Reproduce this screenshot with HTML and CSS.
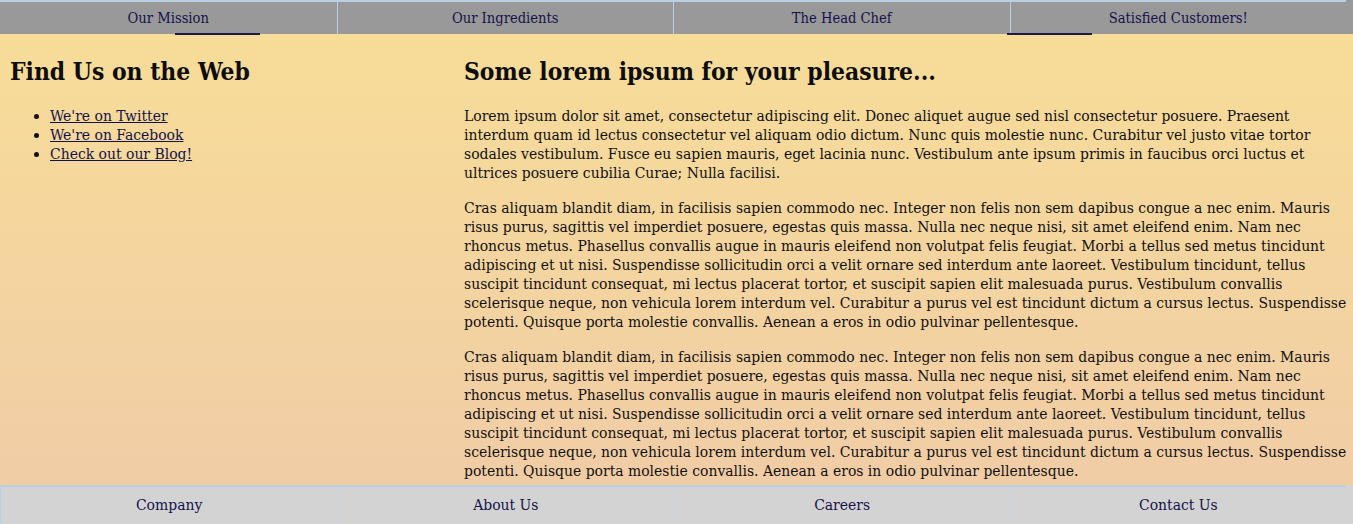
FILE: index.html
```html
<!DOCTYPE html>
<html>
<head>
<meta charset="utf-8">
<link rel="stylesheet" href="styles.css">
<title>Restaurant</title>
</head>
<body>
<nav class="topnav">
  <ul class="navlist">
    <li><a href="#">Our Mission</a></li>
    <li><a href="#">Our Ingredients</a></li>
    <li><a href="#">The Head Chef</a></li>
    <li><a href="#">Satisfied Customers!</a></li>
  </ul>
  <span class="mark mark-a"></span>
  <span class="mark mark-b"></span>
</nav>
<main class="main">
  <aside class="side">
    <h2>Find Us on the Web</h2>
    <ul class="links">
      <li><a href="#">We're on Twitter</a></li>
      <li><a href="#">We're on Facebook</a></li>
      <li><a href="#">Check out our Blog!</a></li>
    </ul>
  </aside>
  <section class="content">
    <h2>Some lorem ipsum for your pleasure...</h2>
    <p>Lorem ipsum dolor sit amet, consectetur adipiscing elit. Donec aliquet augue sed nisl consectetur posuere. Praesent interdum quam id lectus consectetur vel aliquam odio dictum. Nunc quis molestie nunc. Curabitur vel justo vitae tortor sodales vestibulum. Fusce eu sapien mauris, eget lacinia nunc. Vestibulum ante ipsum primis in faucibus orci luctus et ultrices posuere cubilia Curae; Nulla facilisi.</p>
    <p>Cras aliquam blandit diam, in facilisis sapien commodo nec. Integer non felis non sem dapibus congue a nec enim. Mauris risus purus, sagittis vel imperdiet posuere, egestas quis massa. Nulla nec neque nisi, sit amet eleifend enim. Nam nec rhoncus metus. Phasellus convallis augue in mauris eleifend non volutpat felis feugiat. Morbi a tellus sed metus tincidunt adipiscing et ut nisi. Suspendisse sollicitudin orci a velit ornare sed interdum ante laoreet. Vestibulum tincidunt, tellus suscipit tincidunt consequat, mi lectus placerat tortor, et suscipit sapien elit malesuada purus. Vestibulum convallis scelerisque neque, non vehicula lorem interdum vel. Curabitur a purus vel est tincidunt dictum a cursus lectus. Suspendisse potenti. Quisque porta molestie convallis. Aenean a eros in odio pulvinar pellentesque.</p>
    <p>Cras aliquam blandit diam, in facilisis sapien commodo nec. Integer non felis non sem dapibus congue a nec enim. Mauris risus purus, sagittis vel imperdiet posuere, egestas quis massa. Nulla nec neque nisi, sit amet eleifend enim. Nam nec rhoncus metus. Phasellus convallis augue in mauris eleifend non volutpat felis feugiat. Morbi a tellus sed metus tincidunt adipiscing et ut nisi. Suspendisse sollicitudin orci a velit ornare sed interdum ante laoreet. Vestibulum tincidunt, tellus suscipit tincidunt consequat, mi lectus placerat tortor, et suscipit sapien elit malesuada purus. Vestibulum convallis scelerisque neque, non vehicula lorem interdum vel. Curabitur a purus vel est tincidunt dictum a cursus lectus. Suspendisse potenti. Quisque porta molestie convallis. Aenean a eros in odio pulvinar pellentesque.</p>
  </section>
</main>
<footer class="footer">
  <ul class="footlist">
    <li><a href="#">Company</a></li>
    <li><a href="#">About Us</a></li>
    <li><a href="#">Careers</a></li>
    <li><a href="#">Contact Us</a></li>
  </ul>
</footer>
</body>
</html>
```
FILE: styles.css
```css
html, body {
  margin: 0;
  padding: 0;
  height: 100%;
}
body {
  font-family: "DejaVu Serif", "Liberation Serif", serif;
  font-stretch: condensed;
  font-size: 15.5px;
  color: #111111;
  background: linear-gradient(to bottom, #f8de97 0%, #f0cba7 100%);
  display: grid;
  grid-template-rows: 34px 1fr 39px;
  overflow: hidden;
}
a {
  color: #14124a;
}
.topnav {
  position: relative;
  background: #999999;
  font-size: 14.6px;
}
.navlist, .footlist {
  list-style: none;
  margin: 0;
  padding: 0;
  width: 1346px;
  display: grid;
  grid-template-columns: repeat(4, 1fr);
  height: 100%;
  box-sizing: border-box;
}
.navlist {
  border-top: 2px solid #b8cfe6;
}
.navlist li, .footlist li {
  display: flex;
  justify-content: center;
  align-items: center;
}
.navlist li + li {
  border-left: 1px solid #b8cfe6;
}
.navlist a, .footlist a {
  text-decoration: none;
  color: #14124a;
}
.navlist li {
  padding-bottom: 1px;
}
.mark {
  position: absolute;
  top: 33px;
  height: 2px;
  width: 85px;
  background: #1c1a4e;
}
.mark-a { left: 175px; }
.mark-b { left: 1007px; }
.main {
  overflow: hidden;
  display: grid;
  grid-template-columns: 451px 1fr;
  min-height: 0;
}
.side {
  padding-left: 10px;
}
.content {
  padding-left: 13px;
  padding-right: 6px;
}
h2 {
  font-size: 24.4px;
  line-height: 28px;
  margin: 24px 0 21px 0;
  font-weight: bold;
  color: #0d0d0d;
}
.links {
  margin: 0;
  padding-left: 40px;
  line-height: 19px;
}
p {
  margin: 0 0 16px 0;
  line-height: 19px;
}
.footer {
  background: #d3d3d3;
  font-size: 15.5px;
}
.footlist {
  border-top: 2px solid #b8cfe6;
  border-left: 1px solid #b8cfe6;
}
.footlist li + li {
  border-left: 1px solid #c6d4e2;
}
.footlist li {
  padding-bottom: 2px;
}
```
